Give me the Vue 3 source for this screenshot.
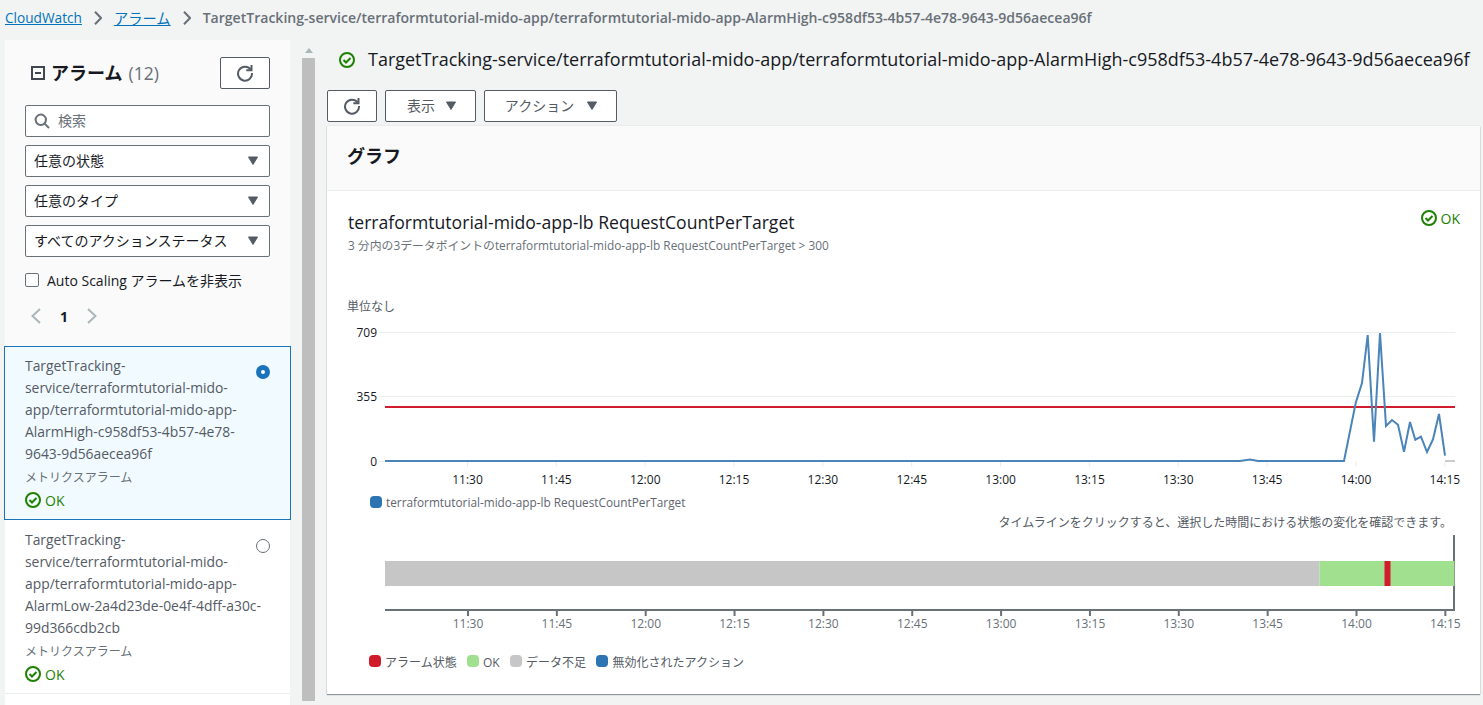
<script setup>
const alarms = [
  { name: 'TargetTracking-service/terraformtutorial-mido-app/terraformtutorial-mido-app-AlarmHigh-c958df53-4b57-4e78-9643-9d56aecea96f', selected: true },
  { name: 'TargetTracking-service/terraformtutorial-mido-app/terraformtutorial-mido-app-AlarmLow-2a4d23de-0e4f-4dff-a30c-99d366cdb2cb', selected: false },
]
const filters = ['任意の状態', '任意のタイプ', 'すべてのアクションステータス']
const ticks = ['11:30','11:45','12:00','12:15','12:30','12:45','13:00','13:15','13:30','13:45','14:00','14:15'].map((t, i) => ({ t, x: 467.5 - 327 + i * 88.85 }))
const ox = 327, oy = 191
const raw = [[385,461],[1240,461],[1250,459.5],[1258,461],[1344,461],[1355.7,403],[1362,383],[1367.7,335],[1374,441.7],[1380,333],[1386,426],[1392,420],[1398,424.7],[1404,451.7],[1410,422],[1415.3,439.7],[1421,436.7],[1427,452],[1433,439.3],[1439,414],[1445,455.7]]
const line = raw.map(([x, y]) => `${x - ox},${y - oy}`).join(' ')
</script>

<template>
  <div class="page">
    <nav class="crumbs">
      <a class="link">CloudWatch</a>
      <svg class="chev" width="8" height="14" viewBox="0 0 8 14"><path d="M1 .7L7 7l-6 6.3" fill="none" stroke="#687078" stroke-width="2"/></svg>
      <a class="link jp">アラーム</a>
      <svg class="chev" width="8" height="14" viewBox="0 0 8 14"><path d="M1 .7L7 7l-6 6.3" fill="none" stroke="#687078" stroke-width="2"/></svg>
      <span class="current">TargetTracking-service/terraformtutorial-mido-app/terraformtutorial-mido-app-AlarmHigh-c958df53-4b57-4e78-9643-9d56aecea96f</span>
    </nav>

    <div class="body">
      <aside class="side">
        <div class="side-top">
          <div class="side-head">
            <svg class="collapse" width="14" height="14" viewBox="0 0 14 14"><rect x="1" y="1" width="12" height="12" fill="none" stroke="#414750" stroke-width="2"/><path d="M4 7h6" stroke="#414750" stroke-width="2"/></svg>
            <h2 class="side-title">アラーム</h2>
            <span class="count">(12)</span>
            <button class="btn refresh side-refresh">
              <svg width="18" height="18" viewBox="0 0 18 18"><path d="M14.6 5.4A7 7 0 1 0 16 9" fill="none" stroke="#545b64" stroke-width="2"/><path d="M15.5 1v5.2h-5.2" fill="none" stroke="#545b64" stroke-width="2"/></svg>
            </button>
          </div>
          <div class="field search">
            <svg width="16" height="16" viewBox="0 0 16 16"><circle cx="6.8" cy="6.8" r="5.2" fill="none" stroke="#687078" stroke-width="2"/><path d="M10.6 10.6L15 15" stroke="#687078" stroke-width="2"/></svg>
            <span class="placeholder">検索</span>
          </div>
          <div v-for="f in filters" :key="f" class="field select">
            <span class="field-text">{{ f }}</span>
            <svg width="12" height="10" viewBox="0 0 12 10"><path d="M1.5 1h9L6 8.5z" fill="#545b64" stroke="#545b64"/></svg>
          </div>
          <label class="check">
            <span class="box"></span>
            <span>Auto Scaling アラームを非表示</span>
          </label>
          <div class="pager">
            <svg width="10" height="16" viewBox="0 0 10 16"><path d="M9 1L1.5 8 9 15" fill="none" stroke="#aab7b8" stroke-width="2"/></svg>
            <b>1</b>
            <svg width="10" height="16" viewBox="0 0 10 16"><path d="M1 1l7.5 7L1 15" fill="none" stroke="#aab7b8" stroke-width="2"/></svg>
          </div>
        </div>
        <ul class="list">
          <li v-for="a in alarms" :key="a.name" class="item" :class="{ selected: a.selected }">
            <div class="item-text">
              <div class="item-name">{{ a.name }}</div>
              <div class="item-type">メトリクスアラーム</div>
              <div class="status">
                <svg width="16" height="16" viewBox="0 0 16 16"><circle cx="8" cy="8" r="7" fill="none" stroke="#1d8102" stroke-width="2"/><path d="M4.5 8l2.5 2.5L11.5 6" fill="none" stroke="#1d8102" stroke-width="2"/></svg>
                <span>OK</span>
              </div>
            </div>
            <span class="radio" :class="{ on: a.selected }"></span>
          </li>
        </ul>
      </aside>

      <div class="scrollbar">
        <svg class="arrow" width="8" height="5" viewBox="0 0 8 5"><path d="M0 5L4 0l4 5z" fill="#aab7b8"/></svg>
        <div class="thumb"></div>
      </div>

      <main class="main">
        <div class="title-row">
          <svg width="16" height="16" viewBox="0 0 16 16"><circle cx="8" cy="8" r="7" fill="none" stroke="#1d8102" stroke-width="2"/><path d="M4.5 8l2.5 2.5L11.5 6" fill="none" stroke="#1d8102" stroke-width="2"/></svg>
          <h1 class="title">TargetTracking-service/terraformtutorial-mido-app/terraformtutorial-mido-app-AlarmHigh-c958df53-4b57-4e78-9643-9d56aecea96f</h1>
        </div>
        <div class="actions">
          <button class="btn refresh">
            <svg width="18" height="18" viewBox="0 0 18 18"><path d="M14.6 5.4A7 7 0 1 0 16 9" fill="none" stroke="#545b64" stroke-width="2"/><path d="M15.5 1v5.2h-5.2" fill="none" stroke="#545b64" stroke-width="2"/></svg>
          </button>
          <button class="btn menu view"><span class="field-text">表示</span>
            <svg width="12" height="10" viewBox="0 0 12 10"><path d="M1.5 1h9L6 8.5z" fill="#545b64" stroke="#545b64"/></svg>
          </button>
          <button class="btn menu act"><span class="field-text">アクション</span>
            <svg width="12" height="10" viewBox="0 0 12 10"><path d="M1.5 1h9L6 8.5z" fill="#545b64" stroke="#545b64"/></svg>
          </button>
        </div>

        <section class="card">
          <header class="card-head"><h2>グラフ</h2></header>
          <div class="card-body">
            <div class="chart-top">
              <div>
                <div class="chart-title">terraformtutorial-mido-app-lb RequestCountPerTarget</div>
                <div class="chart-sub">3 分内の3データポイントのterraformtutorial-mido-app-lb RequestCountPerTarget &gt; 300</div>
              </div>
              <div class="status chart-ok">
                <svg width="16" height="16" viewBox="0 0 16 16"><circle cx="8" cy="8" r="7" fill="none" stroke="#1d8102" stroke-width="2"/><path d="M4.5 8l2.5 2.5L11.5 6" fill="none" stroke="#1d8102" stroke-width="2"/></svg>
                <span>OK</span>
              </div>
            </div>
            <svg class="plot" width="1153" height="503" viewBox="0 0 1153 503">
              <path d="M58 141.5H1128M58 205.5H1128" stroke="#eaeded" stroke-width="1"/>
              <text x="20" y="120" class="lab grey">単位なし</text>
              <text x="50" y="146" class="lab dark" text-anchor="end">709</text>
              <text x="50" y="210" class="lab dark" text-anchor="end">355</text>
              <text x="50" y="275" class="lab dark" text-anchor="end">0</text>
              <path d="M52 141.5h6M52 205.5h6M52 270.5h6" stroke="#eaeded"/>
              <path d="M1118 270H1128" stroke="#ccc" stroke-width="2"/>
              <path d="M58 216H1128" stroke="#d01c2c" stroke-width="2"/>
              <polyline :points="line" fill="none" stroke="#4a84b8" stroke-width="2"/>
              <g v-for="k in ticks" :key="k.t">
                <path :d="`M${k.x} 271V276`" stroke="#eaeded"/>
                <text :x="k.x" y="293" class="lab dark" text-anchor="middle">{{ k.t }}</text>
              </g>
              <rect x="43" y="305" width="12" height="12" rx="4" fill="#2e73b2"/>
              <text x="59" y="316" class="lab leg">terraformtutorial-mido-app-lb RequestCountPerTarget</text>

              <text x="1125" y="336" class="lab grey" text-anchor="end">タイムラインをクリックすると、選択した時間における状態の変化を確認できます。</text>
              <path d="M1127 344V420" stroke="#687078" stroke-width="2"/>
              <rect x="58" y="370" width="934.5" height="25" fill="#c6c6c6"/>
              <rect x="992.5" y="370" width="135" height="25" fill="#a0e08e"/>
              <rect x="1057.5" y="370" width="6" height="25" fill="#d01c2c"/>
              <path d="M58 419H1128" stroke="#687078" stroke-width="2"/>
              <g v-for="k in ticks" :key="'t'+k.t">
                <path :d="`M${k.x + 0.5} 419V425`" stroke="#687078" stroke-width="2"/>
                <text :x="k.x + 0.5" y="437" class="lab grey2" text-anchor="middle">{{ k.t }}</text>
              </g>
              <rect x="42" y="464" width="12" height="12" rx="4" fill="#d01c2c"/>
              <text x="58" y="476" class="lab grey">アラーム状態</text>
              <rect x="140" y="464" width="12" height="12" rx="4" fill="#a0e08e"/>
              <text x="156" y="476" class="lab grey">OK</text>
              <rect x="183" y="464" width="12" height="12" rx="4" fill="#c6c6c6"/>
              <text x="199" y="476" class="lab grey">データ不足</text>
              <rect x="269" y="464" width="12" height="12" rx="4" fill="#2e73b2"/>
              <text x="285.5" y="476" class="lab grey">無効化されたアクション</text>
            </svg>
          </div>
        </section>
      </main>
    </div>
  </div>
</template>

<style>
html, body { margin: 0; background: #f2f3f3; overflow: hidden; }
</style>

<style scoped>
.page {
  width: 1483px;
  height: 705px;
  overflow: hidden;
  background: #f2f3f3;
  font-family: "Open Sans", "Noto Sans CJK JP", sans-serif;
  color: #16191f;
  font-size: 14px;
}
.crumbs {
  height: 36px;
  box-sizing: border-box;
  padding: 0 0 1px 5px;
  display: flex;
  align-items: center;
  font-size: 13.65px;
  white-space: nowrap;
}
.link { color: #0073bb; text-decoration: underline; }
.jp { font-size: 14.3px; }
.current { color: #687078; font-weight: 600; font-size: 14.05px; }
.chev { margin: 0 12px; flex: none; }
.body { display: flex; height: 669px; padding-top: 4px; }
.side { width: 285px; margin-left: 5px; background: #fafafa; display: flex; flex-direction: column; flex: none; }
.side-top { padding: 17px 20px 0; height: 306px; box-sizing: border-box; }
.side-head { display: flex; align-items: center; height: 31px; margin-bottom: 17px; padding-left: 6px; }
.collapse { margin-right: 6px; }
.side-title { font-size: 18px; margin: 0; font-weight: 700; line-height: 1; }
.count { margin-left: 6px; font-size: 17.5px; color: #687078; }
.btn {
  background: #fff;
  border: 1px solid #545b64;
  border-radius: 2px;
  box-sizing: border-box;
  height: 32px;
  font: inherit;
  color: #545b64;
  padding: 0;
  display: inline-flex;
  align-items: center;
  justify-content: center;
}
.refresh { width: 50px; }
.side-refresh { margin-left: auto; }
.field {
  height: 32px;
  box-sizing: border-box;
  background: #fff;
  border: 1px solid #687078;
  border-radius: 2px;
  margin-bottom: 8px;
  display: flex;
  align-items: center;
  padding: 0 10px 0 8px;
}
.field-text { padding-bottom: 2px; }
.placeholder { color: #687078; margin-left: 8px; padding-bottom: 2px; }
.select { justify-content: space-between; color: #16191f; }
.check { display: flex; align-items: center; gap: 8px; margin-top: 13px; height: 20px; color: #16191f; }
.box { width: 14px; height: 14px; box-sizing: border-box; border: 1px solid #687078; border-radius: 2px; background: #fff; flex: none; }
.pager { display: flex; align-items: center; gap: 19px; margin: 16px 0 0 6px; height: 20px; font-size: 14px; }
.list { list-style: none; margin: 0; padding: 0; background: #fff; flex: 1; }
.item {
  display: flex;
  justify-content: space-between;
  padding: 9px 20px;
  height: 174px;
  box-sizing: border-box;
  border-bottom: 1px solid #eaeded;
}
.item.selected {
  background: #f1faff;
  border: 1px solid #1a74bb;
  margin: 0 -1px;
  padding: 8px 20px;
}
.item-text { width: 242px; margin-right: -11px; flex: none; }
.item-name { line-height: 22px; font-size: 13.9px; color: #545b64; overflow-wrap: anywhere; }
.item-type { font-size: 12px; line-height: 24px; color: #687078; padding-top: 1px; margin-bottom: -1px; }
.status { display: flex; align-items: center; gap: 4px; color: #1d8102; height: 22px; }
.radio { width: 14px; height: 14px; box-sizing: border-box; border: 1px solid #687078; border-radius: 50%; margin-top: 10px; background: #fff; flex: none; }
.radio.on { border: 5px solid #1a74bb; }
.scrollbar { width: 13px; margin-left: 12px; height: 661px; display: flex; flex-direction: column; align-items: center; flex: none; }
.arrow { margin: 8px 0 5px; flex: none; }
.thumb { width: 13px; flex: 1; background: #bebebe; }
.main { margin-left: 12px; width: 1153px; flex: none; }
.title-row { display: flex; align-items: center; gap: 13px; height: 40px; padding-left: 12px; }
.title { margin: 0 0 2px; font-size: 17.98px; font-weight: 400; white-space: nowrap; color: #16191f; }
.actions { display: flex; gap: 8px; margin-top: 10px; }
.menu { gap: 10px; padding-left: 3px; font-size: 14px; }
.view { width: 91px; }
.act { width: 133px; gap: 12px; padding-left: 2px; }
.card { margin-top: 4px; width: 1153px; height: 568px; background: #fff; box-shadow: 0 1px 1px rgba(0, 28, 36, .4), 0 0 1px rgba(0,28,36,.2); }
.card-head { height: 64px; background: #fafafa; border-bottom: 1px solid #eaeded; display: flex; align-items: center; padding-left: 20px; }
.card-head h2 { margin: 0 0 6px; font-size: 18px; font-weight: 700; }
.card-body { position: relative; }
.chart-top { position: absolute; left: 21px; right: 20px; top: 20px; display: flex; justify-content: space-between; }
.chart-title { font-size: 17.6px; line-height: 22px; }
.chart-sub { font-size: 11.85px; line-height: 18px; color: #687078; margin-top: 3px; }
.chart-ok { margin-top: -4px; }
.plot { display: block; }
.lab { font-family: "Open Sans", "Noto Sans CJK JP", sans-serif; font-size: 12px; }
.leg { font-size: 11.8px; fill: #5f6670; }
.dark { fill: #16191f; }
.grey { fill: #545b64; }
.grey2 { fill: #687078; }
</style>
